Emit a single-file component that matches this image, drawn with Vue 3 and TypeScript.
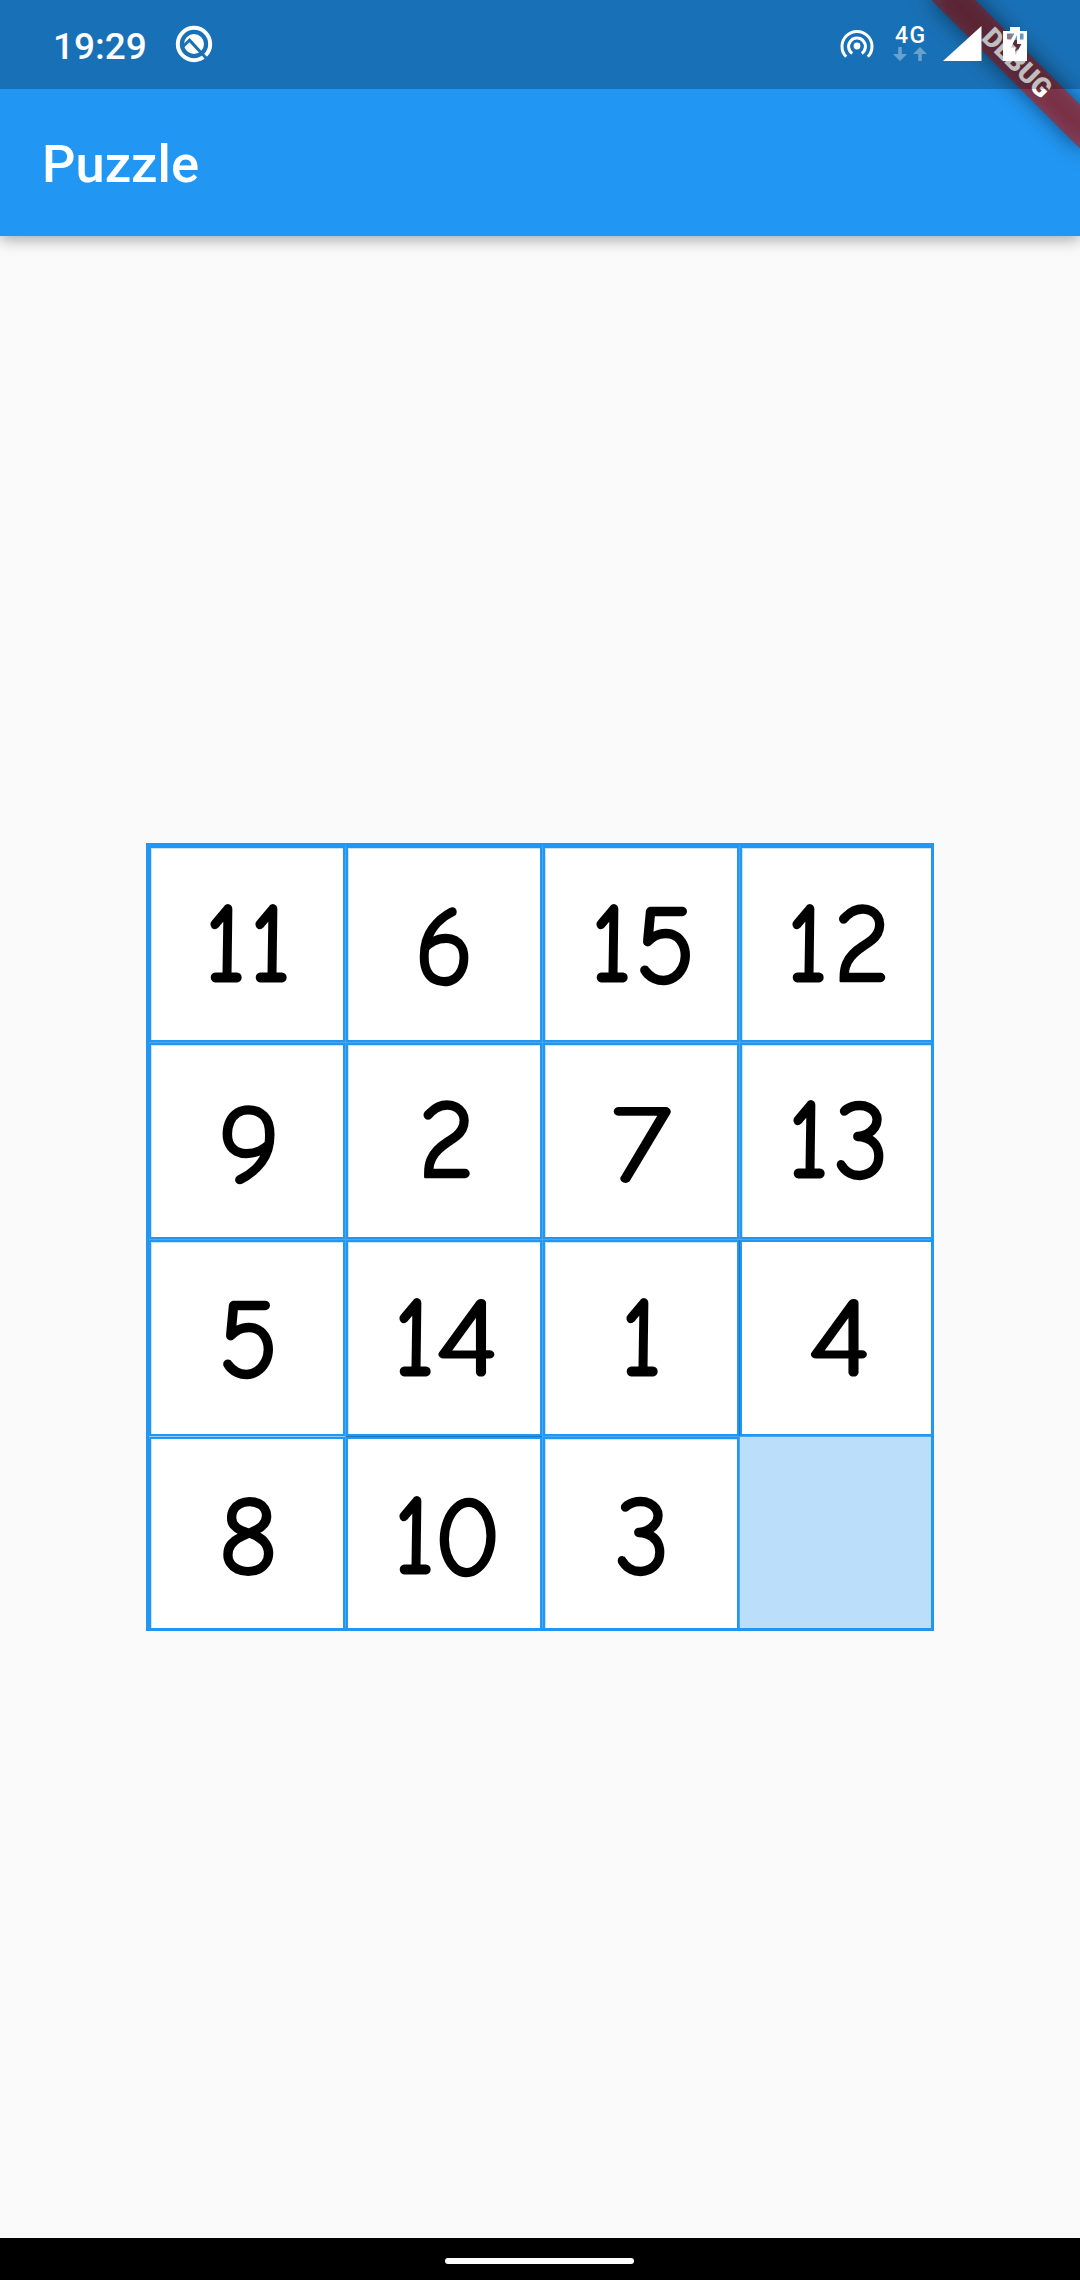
<script setup lang="ts">
interface Glyph {
  advance: number
  bearing: number
  ink: number
  width: number
  drop: number
  stroke: number
}

interface Digit {
  char: string
  left: number
}

interface Tile {
  digits: Digit[]
}

const FONT_SIZE = 110.5

// Advance, side bearing and ink width in em; drawn width, vertical shift and outline in px.
const glyphs: Record<string, Glyph> = {
  '0': { advance: 0.609, bearing: 0.065, ink: 0.478, width: 56, drop: 1.5, stroke: 2.4 },
  '1': { advance: 0.396, bearing: 0.06, ink: 0.287, width: 32, drop: 0, stroke: 2.8 },
  '2': { advance: 0.523, bearing: 0.05, ink: 0.413, width: 47, drop: 0, stroke: 2.5 },
  '3': { advance: 0.506, bearing: 0.04, ink: 0.41, width: 47, drop: 1, stroke: 2.5 },
  '4': { advance: 0.484, bearing: 0.035, ink: 0.398, width: 56, drop: 0.5, stroke: 1.2 },
  '5': { advance: 0.542, bearing: 0.045, ink: 0.444, width: 51.5, drop: 2, stroke: 2.5 },
  '6': { advance: 0.542, bearing: 0.057, ink: 0.428, width: 49.5, drop: 3, stroke: 2.5 },
  '7': { advance: 0.473, bearing: 0.04, ink: 0.416, width: 57, drop: 4, stroke: 1.8 },
  '8': { advance: 0.515, bearing: 0.045, ink: 0.417, width: 50.5, drop: 0.5, stroke: 2.2 },
  '9': { advance: 0.531, bearing: 0.038, ink: 0.429, width: 53, drop: 4.5, stroke: 2.4 },
}

function tile(label: string, ...lefts: number[]): Tile {
  return { digits: [...label].map((char, i) => ({ char, left: lefts[i] })) }
}

const tiles: Tile[] = [
  tile('11', 59, 104), tile('6', 71.5), tile('15', 51, 94.5), tile('12', 50, 96),
  tile('9', 70.5), tile('2', 74.5), tile('7', 69), tile('13', 51, 95),
  tile('5', 71.5), tile('14', 51, 90.5), tile('1', 81), tile('4', 69),
  tile('8', 71.5), tile('10', 51, 91.5), tile('3', 73), tile(''),
]

const baselines = [133.2, 132, 132.5, 134]

function scaleOf(g: Glyph): number {
  return g.width / (g.ink * FONT_SIZE + g.stroke)
}
function digitX(d: Digit): number {
  const g = glyphs[d.char]
  return d.left - (g.bearing * FONT_SIZE - g.stroke / 2) * scaleOf(g)
}
function digitLength(d: Digit): number {
  const g = glyphs[d.char]
  return g.advance * FONT_SIZE * scaleOf(g)
}
function digitY(d: Digit, index: number): number {
  return baselines[Math.floor(index / 4)] + glyphs[d.char].drop
}
</script>

<template>
  <div class="screen">
    <header class="app-bar">
      <h1 class="title">Puzzle</h1>
    </header>

    <main class="body">
      <div class="board">
        <div
          v-for="(t, i) in tiles"
          :key="i"
          class="tile"
          :class="{
            'last-col': i % 4 === 3,
            'last-row': i >= 12,
            empty: !t.digits.length,
            'dark-left': i === 11,
            'dark-top': i === 13,
            'light-top': i === 12,
          }"
        >
          <svg v-if="t.digits.length" class="label" width="187" height="187">
            <text><tspan
              v-for="(d, j) in t.digits"
              :key="j"
              :x="digitX(d)"
              :y="digitY(d, i)"
              :textLength="digitLength(d)"
              :stroke-width="glyphs[d.char].stroke"
              lengthAdjust="spacingAndGlyphs"
            >{{ d.char }}</tspan></text>
          </svg>
        </div>
      </div>
    </main>

    <footer class="nav-bar"><div class="handle"></div></footer>

    <div class="banner"><div class="ribbon"><span>DEBUG</span></div></div>

    <div class="status-bar">
      <span class="time">19:29</span>
      <svg class="q-icon" width="38" height="38" viewBox="-19 -19 38 38">
        <circle r="16.2" fill="none" stroke="#fff" stroke-width="4" />
        <circle r="10" fill="#fff" />
        <path d="M-11 2.5L-4.5 -3.8L12.5 14.5" fill="none" stroke="#1971b6" stroke-width="3" />
      </svg>
      <span class="spacer"></span>
      <svg class="hotspot" width="34" height="34" viewBox="0 0 34 34">
        <circle cx="17" cy="17" r="3.4" fill="#fff" />
        <path d="M12.2 24.4A8.4 8.4 0 1 1 21.8 24.4" fill="none" stroke="#fff" stroke-width="3" />
        <path d="M6.2 27.8A15 15 0 1 1 27.8 27.8" fill="none" stroke="#fff" stroke-width="3" />
      </svg>
      <div class="network">
        <span>4G</span>
        <svg width="34" height="14" viewBox="0 0 34 14">
          <path d="M5.2 0H8.8V7H14L7 14L0 7H5.2Z" />
          <path d="M25.2 14H28.8V7H34L27 0L20 7H25.2Z" />
        </svg>
      </div>
      <svg class="signal" width="39" height="35" viewBox="0 0 39 35">
        <path d="M0 35H38.5V0Z" fill="#fff" />
      </svg>
      <svg class="battery" width="24" height="34" viewBox="0 0 24 34">
        <path fill="#fff" fill-opacity=".35" d="M4 6H21V13H4Z" />
        <path
          fill="#fff"
          fill-rule="evenodd"
          d="M7 0H17V4H24V34H0V4H7ZM4 6.5V12.5H8L11.5 6.5ZM17 6.5V12.5H20.5V6.5ZM14 8L8 20.5H12.3V28L18.5 17H14Z"
        />
      </svg>
    </div>
  </div>
</template>

<style>
body {
  margin: 0;
}
</style>

<style scoped>
.screen {
  position: relative;
  display: flex;
  flex-direction: column;
  width: 1080px;
  height: 2280px;
  overflow: hidden;
  background: #fafafa;
  font-family: Roboto, sans-serif;
}
.app-bar {
  position: relative;
  box-sizing: border-box;
  height: 236px;
  padding: 90px 42px 0;
  background: #2196f3;
  box-shadow: 0 4px 14px rgba(0, 0, 0, 0.32);
}
.title {
  margin: 0;
  color: #fff;
  font-size: 52.5px;
  font-weight: 500;
  line-height: 146px;
}
.title::before {
  display: block;
  height: 1px;
  content: '';
}
.body {
  display: flex;
  flex: 1;
  align-items: center;
  justify-content: center;
}
.board {
  display: grid;
  grid-template-columns: 196px 196px 196px 191px;
  grid-template-rows: 196px 196px 196px 191px;
  gap: 1px;
  border: 3px solid #2196f3;
  background: #46a8f5;
}
.tile {
  position: relative;
  border: 2px solid #2196f3;
  background: #fff;
  box-shadow: inset 1px 1px 0 #c8e4fb;
}
.last-col {
  border-right: 0;
}
.last-row {
  border-bottom: 0;
}
.empty {
  border: 0;
  background: #bbdefb;
  box-shadow: none;
}
.dark-left {
  box-shadow: -1px 0 0 #1a78c2;
}
.dark-top {
  box-shadow: 0 -1px 0 #1a78c2;
}
.light-top {
  box-shadow: inset 1px 0 0 #c8e4fb, 0 -1px 0 #90caf9;
}
.label {
  display: block;
  overflow: visible;
}
.label text {
  fill: #000;
  stroke: #000;
  stroke-linejoin: round;
  font-family: 'Comic Neue', 'DejaVu Sans', sans-serif;
  font-size: 110.5px;
  font-weight: 400;
}
.nav-bar {
  display: flex;
  box-sizing: border-box;
  justify-content: center;
  height: 42px;
  padding-right: 1px;
  background: #000;
}
.handle {
  width: 189px;
  height: 6px;
  margin-top: 20px;
  border-radius: 3px;
  background: #fff;
}
.banner {
  position: absolute;
  top: 0;
  left: 1080px;
  transform: rotate(45deg);
  transform-origin: 0 0;
}
.ribbon {
  position: absolute;
  top: 73.5px;
  left: -105px;
  width: 210px;
  height: 31.5px;
  color: #fff;
  font-size: 26.8px;
  font-weight: 900;
  line-height: 30px;
  text-align: center;
}
.ribbon::before {
  position: absolute;
  inset: 0;
  background: rgba(0, 0, 0, 0.5);
  content: '';
  filter: blur(10.4px);
}
.ribbon::after {
  position: absolute;
  inset: 0;
  background: rgba(183, 28, 28, 0.627);
  content: '';
}
.ribbon span {
  position: relative;
  z-index: 1;
}
.status-bar {
  position: absolute;
  top: 0;
  left: 0;
  display: flex;
  box-sizing: border-box;
  width: 1080px;
  height: 89px;
  padding: 26px 53px 0 53px;
  background: rgba(0, 0, 0, 0.25);
  color: #fff;
}
.time {
  margin-top: -1px;
  font-size: 37px;
  font-weight: 500;
  line-height: 44px;
}
.q-icon {
  margin: -1px 0 0 28px;
}
.spacer {
  flex: 1;
}
.hotspot {
  margin-top: 3px;
}
.network {
  width: 34px;
  margin: 0 16px 0 19px;
  font-size: 23px;
  font-weight: 500;
  line-height: 20px;
  letter-spacing: 1.5px;
}
.network span {
  display: block;
  margin-left: 2px;
}
.network svg {
  display: block;
  margin-top: 1px;
  fill: rgba(255, 255, 255, 0.35);
}
.signal {
  flex: none;
}
.battery {
  flex: none;
  margin: 1px 0 0 21px;
}
</style>
